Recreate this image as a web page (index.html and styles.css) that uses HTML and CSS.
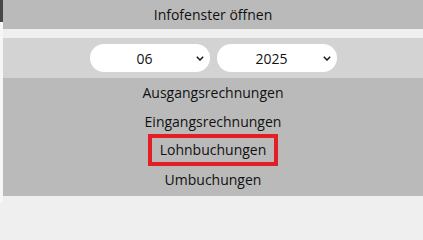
FILE: index.html
```html
<!DOCTYPE html>
<html lang="de">
<head>
<meta charset="utf-8">
<link rel="stylesheet" href="styles.css">
</head>
<body>
<div class="page">
  <div class="edge"><div class="edge-top"></div></div>
  <div class="main">
    <div class="header">Infofenster öffnen</div>
    <div class="filters">
      <div class="select">
        <span class="value">06</span>
        <svg class="chev" width="8" height="5" viewBox="0 0 8 5"><path d="M0.8 0.8 L4 4 L7.2 0.8" fill="none" stroke="#1a1a1a" stroke-width="1.5"/></svg>
      </div>
      <div class="select">
        <span class="value">2025</span>
        <svg class="chev" width="8" height="5" viewBox="0 0 8 5"><path d="M0.8 0.8 L4 4 L7.2 0.8" fill="none" stroke="#1a1a1a" stroke-width="1.5"/></svg>
      </div>
    </div>
    <div class="list">
      <div class="item">Ausgangsrechnungen</div>
      <div class="item">Eingangsrechnungen</div>
      <div class="item"><span class="active">Lohnbuchungen</span></div>
      <div class="item">Umbuchungen</div>
    </div>
  </div>
</div>
</body>
</html>
```
FILE: styles.css
```css
html, body {
  margin: 0;
  padding: 0;
}
body {
  background: #efefef;
  font-family: "Open Sans", "Noto Sans", sans-serif;
  font-size: 14px;
  color: #111;
  width: 423px;
  height: 203px;
  overflow: hidden;
}
.page {
  display: flex;
  height: 203px;
}
.edge {
  width: 3px;
  background: #f6f6f6;
}
.edge-top {
  height: 22px;
  background: #474747;
}
.main {
  flex: 1;
  display: flex;
  flex-direction: column;
}
.header {
  height: 29px;
  background: #bababa;
  display: flex;
  align-items: center;
  justify-content: center;
}
.filters {
  margin-top: 9px;
  height: 40px;
  background: #d3d3d3;
  display: flex;
  align-items: center;
  justify-content: center;
  gap: 7px;
}
.select {
  position: relative;
  width: 120px;
  height: 28px;
  background: #fff;
  border-radius: 14px;
  display: flex;
  align-items: center;
  justify-content: center;
  padding-right: 10px;
  box-sizing: border-box;
}
.chev {
  position: absolute;
  right: 6px;
  top: 12px;
}
.list {
  height: 118px;
  background: #bababa;
  display: flex;
  flex-direction: column;
  align-items: center;
}
.item {
  height: 29px;
  display: flex;
  align-items: center;
  justify-content: center;
}
.active {
  border: 4px solid #e31e24;
  padding: 0 8px;
  line-height: 24px;
  margin-top: -2px;
}
```
